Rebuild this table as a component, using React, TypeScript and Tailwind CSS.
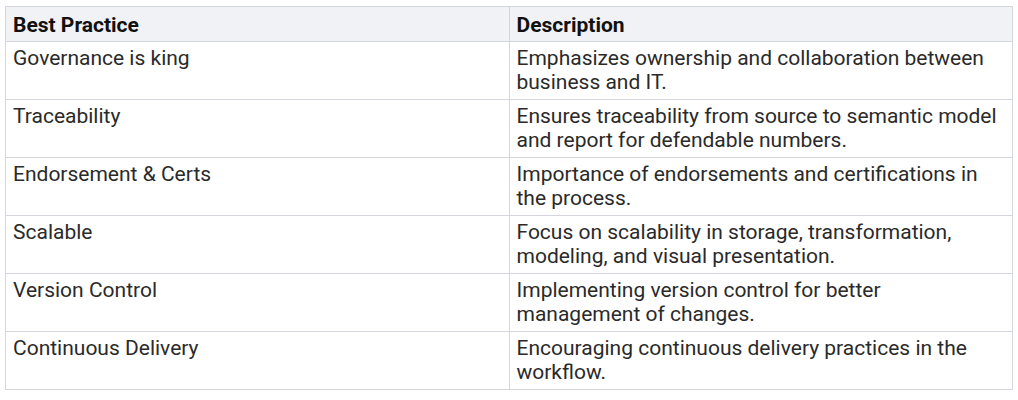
import React from "react";

const rows: [string, string][] = [
  ["Governance is king", "Emphasizes ownership and collaboration between business and IT."],
  ["Traceability", "Ensures traceability from source to semantic model and report for defendable numbers."],
  ["Endorsement & Certs", "Importance of endorsements and certifications in the process."],
  ["Scalable", "Focus on scalability in storage, transformation, modeling, and visual presentation."],
  ["Version Control", "Implementing version control for better management of changes."],
  ["Continuous Delivery", "Encouraging continuous delivery practices in the workflow."],
];

export default function App() {
  return (
    <div className="bg-white w-[1018px] h-[400px] pt-[6px] px-[5px] font-['Roboto',sans-serif] text-[#2a2a2a]">
      <table className="w-[1008px] border-collapse table-fixed text-[21px] leading-[24px]">
        <thead>
          <tr className="bg-[#f0f2f5]">
            <th className="w-1/2 border border-[#d3d7dd] text-left font-bold px-[7px] pt-[6px] pb-[4px] text-[#111111]">Best Practice</th>
            <th className="w-1/2 border border-[#d3d7dd] text-left font-bold px-[7px] pt-[6px] pb-[4px] text-[#111111]">Description</th>
          </tr>
        </thead>
        <tbody>
          {rows.map(([a, b]) => (
            <tr key={a}>
              <td className="border border-[#d3d7dd] align-top px-[7px] pt-[4px] pb-[5px]">{a}</td>
              <td className="border border-[#d3d7dd] align-top px-[7px] pt-[4px] pb-[5px]">{b}</td>
            </tr>
          ))}
        </tbody>
      </table>
    </div>
  );
}
